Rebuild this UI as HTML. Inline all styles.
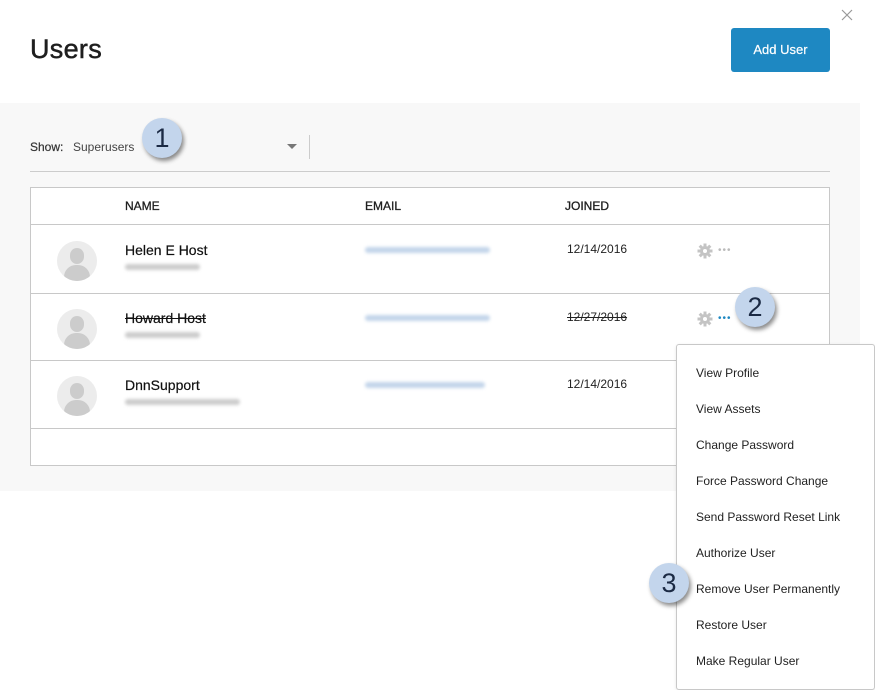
<!DOCTYPE html>
<html><head><meta charset="utf-8"><style>
*{margin:0;padding:0;box-sizing:border-box}
body{width:875px;height:690px;background:#fff;font-family:"Liberation Sans",sans-serif;position:relative;overflow:hidden;color:#1e1e1e}
.a{position:absolute}
.gray{left:0;top:103px;width:860px;height:388px;background:#f8f8f8}
h1{position:absolute;left:30px;top:34px;font-size:27px;font-weight:normal;color:#1e1e1e;-webkit-text-stroke:0.5px #1e1e1e;letter-spacing:0.3px}
.btn{left:731px;top:28px;width:99px;height:44px;background:#1e88c2;border-radius:3px;color:#fff;font-size:13px;text-align:center;line-height:44px;-webkit-text-stroke:0.2px #fff}
.table{left:30px;top:187px;width:800px;height:279px;border:1px solid #c8c8c8;background:#fff}
.line{left:30px;width:800px;height:1px;background:#c8c8c8}
.th{font-size:12px;top:199px;color:#1e1e1e;-webkit-text-stroke:0.3px #1e1e1e}
.av{width:40px;height:40px;border-radius:50%;background:#ececec;overflow:hidden}
.av:before{content:"";position:absolute;left:13px;top:7px;width:14px;height:16px;border-radius:50%/45%;background:#ccc}
.av:after{content:"";position:absolute;left:7px;top:24px;width:26px;height:20px;border-radius:12px 12px 0 0;background:#ccc}
.nm{font-size:14px;color:#111;-webkit-text-stroke:0.2px #111}
.blur{height:6px;border-radius:3px;filter:blur(1.5px)}
.dt{font-size:12px;color:#222}
.dots{font-size:10px;letter-spacing:1px;color:#bbb}
.num{width:40px;height:40px;border-radius:50%;background:#c3d5ec;box-shadow:2px 3px 4px rgba(0,0,0,.45);font-size:27px;color:#1b2a44;text-align:center;line-height:40px}
.menu{left:676px;top:344px;width:199px;height:346px;background:#fff;border:1px solid #c8c8c8;border-radius:3px;box-shadow:0 1px 3px rgba(0,0,0,.1)}
.mi{left:696px;font-size:12px;color:#222}
</style></head><body>
<h1>Users</h1>
<svg class="a" style="left:841px;top:9px" width="12" height="12"><path d="M1 1L11 11M11 1L1 11" stroke="#999" stroke-width="1.2"/></svg>
<div class="a btn">Add User</div>
<div class="a gray"></div>
<div class="a" style="left:30px;top:140px;font-size:12px;color:#333;-webkit-text-stroke:0.2px #333">Show:</div>
<div class="a" style="left:73px;top:140px;font-size:12px;color:#444">Superusers</div>
<div class="a" style="left:287px;top:144px;border-left:5px solid transparent;border-right:5px solid transparent;border-top:5px solid #777"></div>
<div class="a" style="left:309px;top:135px;width:1px;height:24px;background:#ccc"></div>
<div class="a" style="left:30px;top:171px;width:800px;height:1px;background:#ccc"></div>
<div class="a table"></div>
<div class="a line" style="top:224px"></div>
<div class="a line" style="top:293px"></div>
<div class="a line" style="top:360px"></div>
<div class="a line" style="top:428px"></div>
<div class="a th" style="left:125px">NAME</div>
<div class="a th" style="left:365px">EMAIL</div>
<div class="a th" style="left:565px">JOINED</div>

<div class="a av" style="left:57px;top:241px"></div>
<div class="a nm" style="left:125px;top:242px">Helen E Host</div>
<div class="a blur" style="left:125px;top:264px;width:75px;background:#ccc"></div>
<div class="a blur" style="left:365px;top:247px;width:125px;background:#c3d5ea"></div>
<div class="a dt" style="left:567px;top:242px">12/14/2016</div>
<svg class="a" style="left:697px;top:243px" width="16" height="16" viewBox="0 0 16 16"><g fill="#c4c4c4"><circle cx="8" cy="8" r="5"/><rect x="6.5" y="0.5" width="3" height="15"/><rect x="0.5" y="6.5" width="15" height="3"/><rect x="6.5" y="0.5" width="3" height="15" transform="rotate(45 8 8)"/><rect x="6.5" y="0.5" width="3" height="15" transform="rotate(-45 8 8)"/></g><circle cx="8" cy="8" r="2" fill="#fff"/></svg>
<div class="a dots" style="left:718px;top:245px">•••</div>

<div class="a av" style="left:57px;top:309px"></div>
<div class="a nm" style="left:125px;top:310px;text-decoration:line-through">Howard Host</div>
<div class="a blur" style="left:125px;top:332px;width:75px;background:#ccc"></div>
<div class="a blur" style="left:365px;top:315px;width:125px;background:#c3d5ea"></div>
<div class="a dt" style="left:567px;top:310px;text-decoration:line-through">12/27/2016</div>
<svg class="a" style="left:697px;top:311px" width="16" height="16" viewBox="0 0 16 16"><g fill="#c4c4c4"><circle cx="8" cy="8" r="5"/><rect x="6.5" y="0.5" width="3" height="15"/><rect x="0.5" y="6.5" width="15" height="3"/><rect x="6.5" y="0.5" width="3" height="15" transform="rotate(45 8 8)"/><rect x="6.5" y="0.5" width="3" height="15" transform="rotate(-45 8 8)"/></g><circle cx="8" cy="8" r="2" fill="#fff"/></svg>
<div class="a dots" style="left:718px;top:313px;color:#1e88c2">•••</div>

<div class="a av" style="left:57px;top:376px"></div>
<div class="a nm" style="left:125px;top:377px">DnnSupport</div>
<div class="a blur" style="left:125px;top:399px;width:115px;background:#ccc"></div>
<div class="a blur" style="left:365px;top:382px;width:120px;background:#c3d5ea"></div>
<div class="a dt" style="left:567px;top:377px">12/14/2016</div>

<div class="a menu"></div>
<div class="a mi" style="top:366px">View Profile</div>
<div class="a mi" style="top:402px">View Assets</div>
<div class="a mi" style="top:438px">Change Password</div>
<div class="a mi" style="top:474px">Force Password Change</div>
<div class="a mi" style="top:510px">Send Password Reset Link</div>
<div class="a mi" style="top:546px">Authorize User</div>
<div class="a mi" style="top:582px">Remove User Permanently</div>
<div class="a mi" style="top:618px">Restore User</div>
<div class="a mi" style="top:654px">Make Regular User</div>

<div class="a num" style="left:142px;top:118px">1</div>
<div class="a num" style="left:735px;top:287px">2</div>
<div class="a num" style="left:649px;top:563px">3</div>
</body></html>
